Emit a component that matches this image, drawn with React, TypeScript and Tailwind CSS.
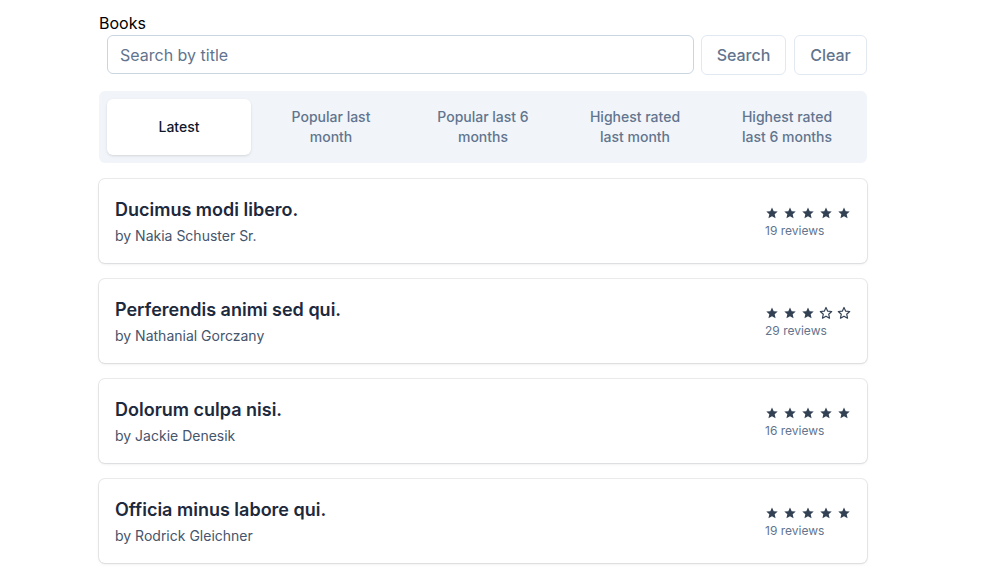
import { useState } from 'react'

// ─── data ─────────────────────────────────────────────────────────────────────

const TABS = [
  'Latest',
  'Popular last month',
  'Popular last 6 months',
  'Highest rated last month',
  'Highest rated last 6 months',
] as const

const BOOKS = [
  { title: 'Ducimus modi libero.', author: 'Nakia Schuster Sr.', rating: 5, reviews: 19 },
  { title: 'Perferendis animi sed qui.', author: 'Nathanial Gorczany', rating: 3, reviews: 29 },
  { title: 'Dolorum culpa nisi.', author: 'Jackie Denesik', rating: 5, reviews: 16 },
  { title: 'Officia minus labore qui.', author: 'Rodrick Gleichner', rating: 5, reviews: 19 },
]

const STAR =
  'M12 2.5l2.9 6.3 6.9.7-5.2 4.6 1.5 6.8L12 17.4l-6.1 3.5 1.5-6.8-5.2-4.6 6.9-.7z'

// ─── parts ────────────────────────────────────────────────────────────────────

function Stars({ rating }: { rating: number }) {
  return (
    <div className="flex gap-1">
      {[1, 2, 3, 4, 5].map(i => (
        <svg key={i} viewBox="0 0 24 24" className="h-[14px] w-[14px]">
          {i <= rating ? (
            <path d={STAR} fill="#334155" />
          ) : (
            <path d={STAR} fill="none" stroke="#334155" strokeWidth="2" strokeLinejoin="round" />
          )}
        </svg>
      ))}
    </div>
  )
}

function BookCard({ book }: { book: typeof BOOKS[number] }) {
  return (
    <div className="flex items-center justify-between rounded-md bg-white px-4 pt-[17px] pb-[17px] shadow-[0_0_0_1px_rgba(15,23,42,0.08),0_1px_3px_rgba(15,23,42,0.1)]">
      <div>
        <h2 className="text-lg leading-7 font-semibold text-slate-800">{book.title}</h2>
        <p className="mt-0.5 text-sm leading-5 text-slate-600">by {book.author}</p>
      </div>
      <div className="flex flex-col pt-[3px]">
        <Stars rating={book.rating} />
        <span className="mt-[3px] text-xs text-slate-500">{book.reviews} reviews</span>
      </div>
    </div>
  )
}

// ─── app ──────────────────────────────────────────────────────────────────────

export default function App() {
  const [tab, setTab] = useState<string>('Latest')
  const [query, setQuery] = useState('')

  return (
    <div className="min-h-screen w-[966px] bg-white font-['Inter',sans-serif] text-black">
      <div className="mx-auto max-w-3xl pt-[13px]">
        <h1 className="text-base leading-5">Books</h1>

        {/* search */}
        <form className="mt-[2px] flex gap-2 pl-2" onSubmit={e => e.preventDefault()}>
          <input
            className="mr-[-1px] h-[39px] flex-1 rounded-md border border-slate-300 px-3 text-base text-slate-700 placeholder:text-slate-500 focus:outline-none"
            placeholder="Search by title"
            value={query}
            onChange={e => setQuery(e.target.value)}
          />
          <button className="h-10 w-[85px] rounded-md border border-slate-200 bg-white text-base font-medium text-slate-500">
            Search
          </button>
          <button
            type="button"
            onClick={() => setQuery('')}
            className="h-10 w-[73px] rounded-md border border-slate-200 bg-white text-base font-medium text-slate-500"
          >
            Clear
          </button>
        </form>

        {/* tabs */}
        <div className="mt-4 grid grid-cols-5 gap-2 rounded-md bg-slate-100 p-2">
          {TABS.map(t => (
            <button
              key={t}
              onClick={() => setTab(t)}
              className={`flex h-14 items-center justify-center rounded-md px-5 text-center text-sm leading-5 font-medium ${
                tab === t ? 'bg-white text-slate-900 shadow-sm' : 'text-slate-500'
              }`}
            >
              {t}
            </button>
          ))}
        </div>

        {/* list */}
        <div className="mt-4 flex flex-col gap-4">
          {BOOKS.map(b => (
            <BookCard key={b.title} book={b} />
          ))}
        </div>
      </div>
    </div>
  )
}
